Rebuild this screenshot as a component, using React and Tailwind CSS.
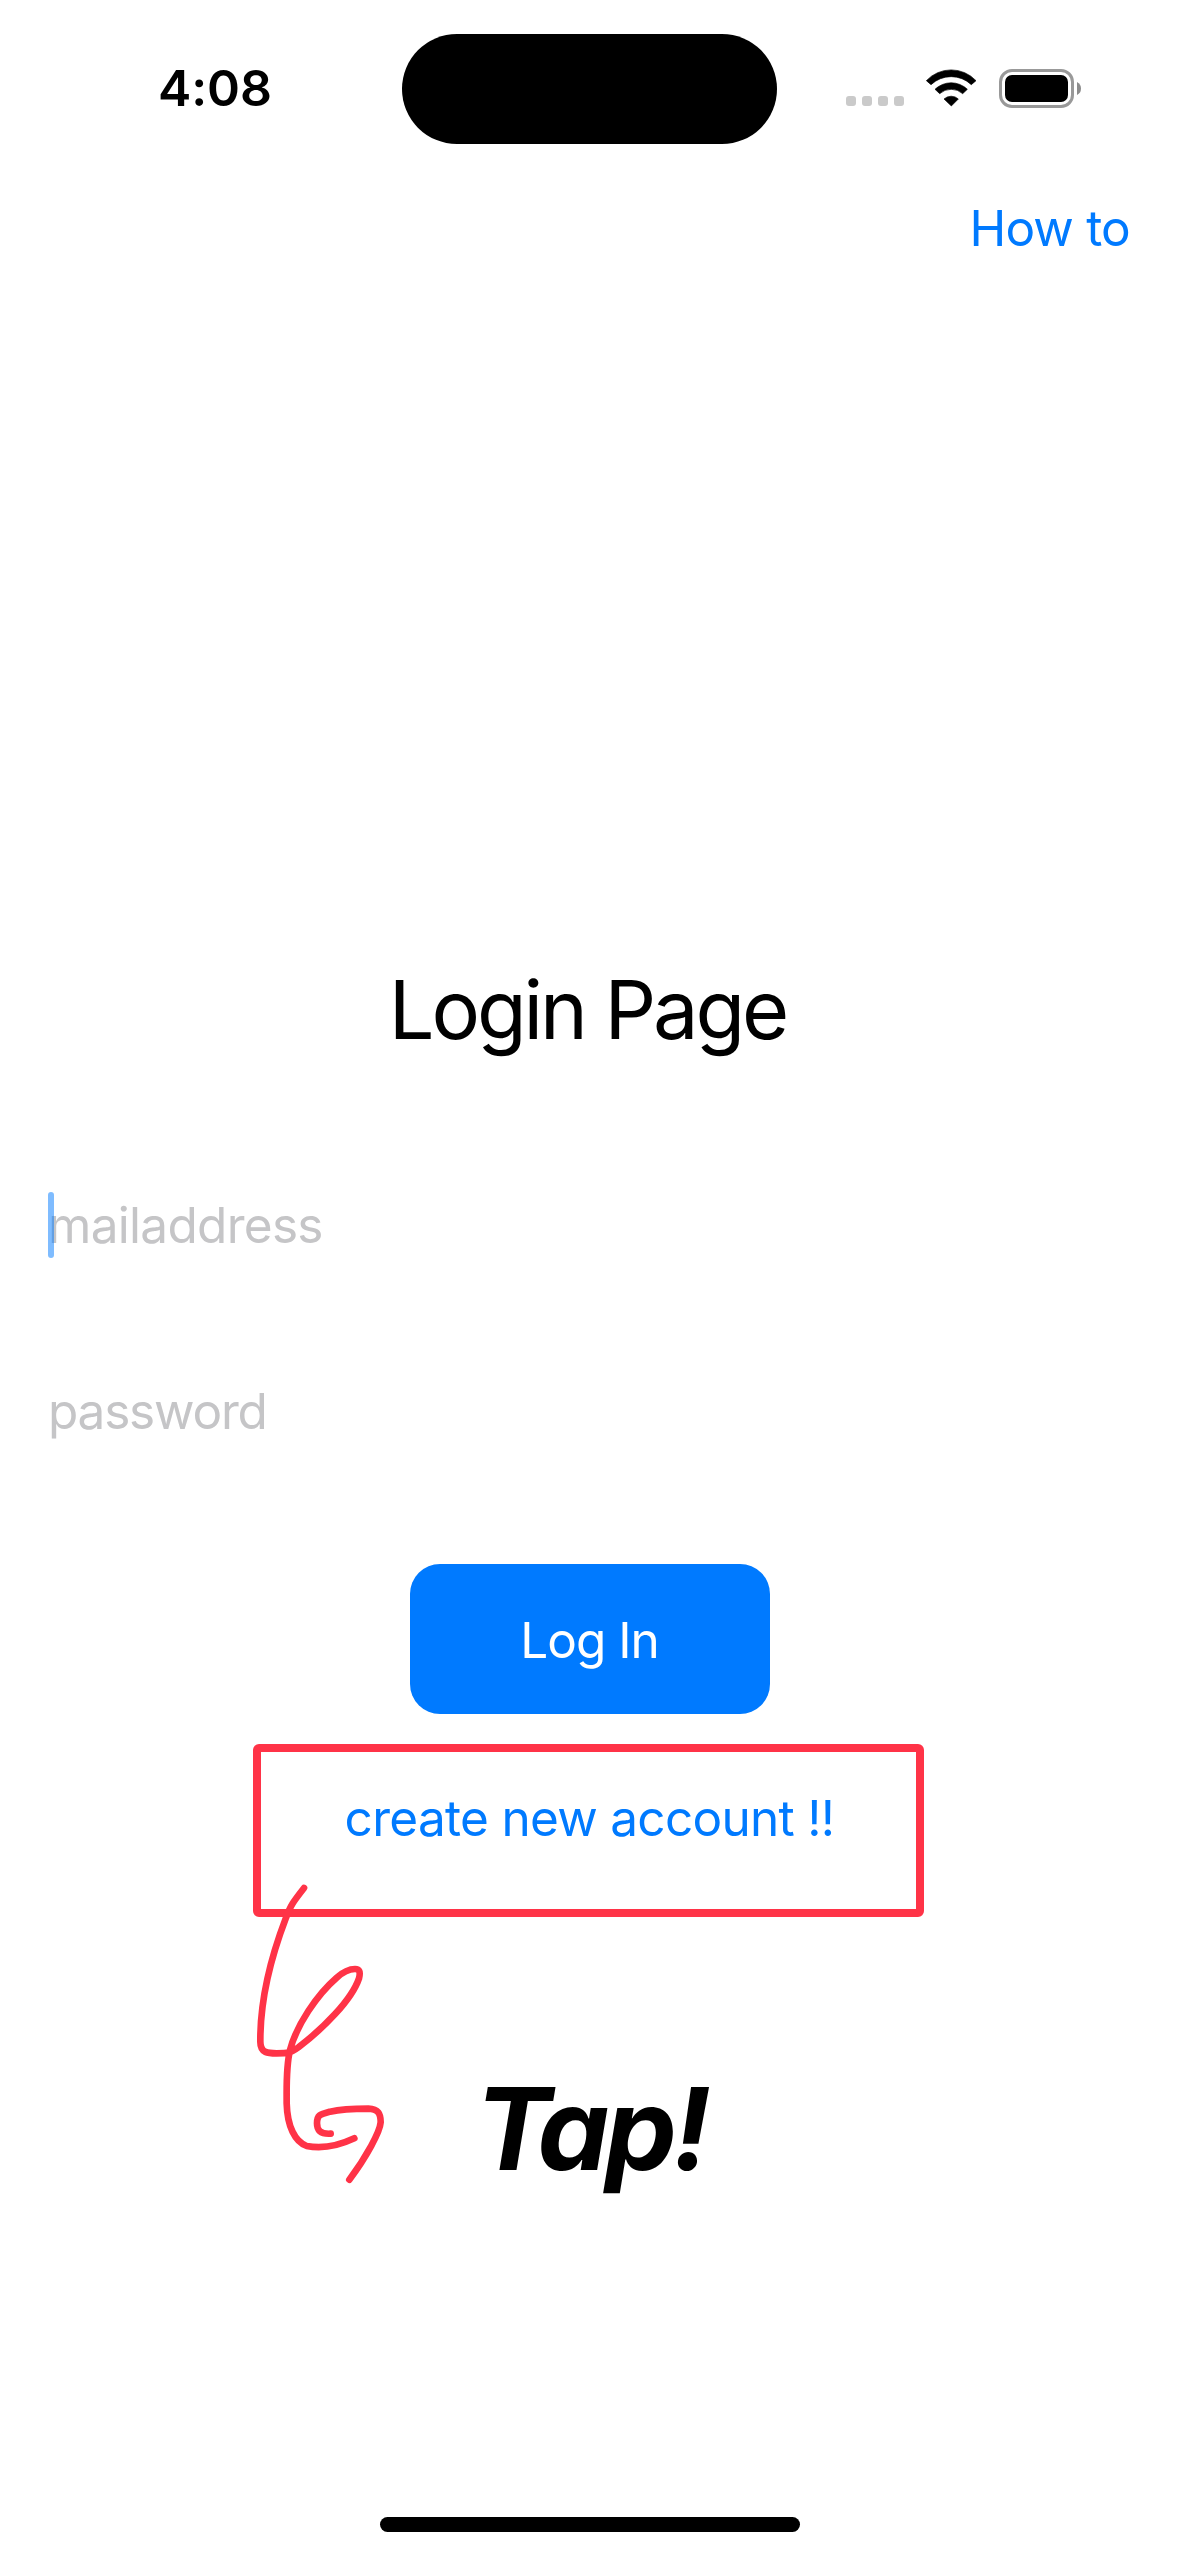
import React from "react";

function Wifi() {
  return (
    <svg className="h-[37.3px] w-[50.7px]" viewBox="0 0 152 112" fill="#000" stroke="#000" strokeWidth="2" strokeLinejoin="round">
      <path d="M1 35 A102 102 0 0 1 150 35 L136 47 A88 88 0 0 0 15 47 Z" />
      <path d="M27 61 A70 70 0 0 1 124 61 L110 74 A52 52 0 0 0 41 74 Z" />
      <path d="M54 90 A32 32 0 0 1 97 90 L76 111 Z" />
    </svg>
  );
}

function Battery() {
  return (
    <div className="flex items-center gap-[3px]">
      <div className="h-[39px] w-[75px] rounded-[13px] border-[3px] border-[#999] p-[3px]">
        <div className="h-full w-full rounded-[7px] bg-black" />
      </div>
      <svg className="h-[13px] w-1" viewBox="0 0 4 13" fill="#8c8c8c">
        <path d="M0 0 Q4 2 4 6.5 Q4 11 0 13 Z" />
      </svg>
    </div>
  );
}

function StatusBar() {
  return (
    <header className="flex h-[178px] items-start pt-[34px]">
      <div className="flex h-[110px] w-[402px] items-center pb-[3px] pl-[158px] text-[50px] font-semibold leading-none tracking-[-0.1px]">
        4:08
      </div>
      <div className="h-[110px] w-[375px] rounded-full bg-black" />
      <div className="flex h-[110px] flex-1 items-center pb-[2px] pl-[69px]">
        <div className="mt-[26px] flex gap-1.5">
          <i className="size-2.5 rounded-[3px] bg-[#cacaca]" />
          <i className="size-2.5 rounded-[3px] bg-[#cacaca]" />
          <i className="size-2.5 rounded-[3px] bg-[#cacaca]" />
          <i className="size-2.5 rounded-[3px] bg-[#cacaca]" />
        </div>
        <div className="ml-[22px] mr-[22px] flex">
          <Wifi />
        </div>
        <Battery />
      </div>
    </header>
  );
}

function Scribble() {
  return (
    <svg
      className="pointer-events-none absolute -left-[20.5px] top-[118px] h-[330px] w-[160px]"
      viewBox="0 0 480 990"
      fill="none"
      stroke="#ff3347"
      strokeWidth="20"
      strokeLinecap="round"
      strokeLinejoin="round"
    >
      <path d="M192 54 C160 95 152 105 137 146 C105 230 60 370 61 515 C61 550 85 550 110 550 C145 550 150 550 175 532 C250 475 335 390 357 325 C362 305 358 297 345 297 C325 297 310 305 290 323 C230 375 170 465 150 540 C138 590 140 640 140 700 C142 770 165 815 200 828 C240 836 290 830 343 805" />
      <path d="M272 791 C240 793 231 780 231 760 C231 735 240 733 270 725 C310 716 350 716 385 716 C415 718 422 730 422 757 C420 785 380 860 328 929" />
    </svg>
  );
}

export default function App() {
  return (
    <div className="flex h-[2556px] w-[1179px] flex-col overflow-hidden bg-white font-['Inter',sans-serif] text-[49.5px] text-black">
      <StatusBar />
      <nav className="flex justify-end pr-[49px]">
        <a className="leading-[100px] tracking-[-0.8px] text-[#007aff]">How to</a>
      </nav>
      <main className="flex flex-col items-center pt-[682px]">
        <h1 className="pr-[4px] text-[81px] leading-[100px] tracking-[-3.1px]">Login Page</h1>
        <div className="mt-[115px] w-full px-12">
          <div className="relative leading-[100px] tracking-[-0.7px] text-[#c5c5c7]">
            mailaddress
            <span className="absolute left-0 top-[17px] h-[66px] w-1.5 rounded-full bg-[#007aff]/50" />
          </div>
        </div>
        <div className="mt-[86px] w-full px-12 leading-[100px] tracking-[-1.2px] text-[#c5c5c7]">password</div>
        <button className="mt-[103px] h-[150px] w-[360px] rounded-[30px] bg-[#007aff] pt-0.5 leading-[100px] tracking-[-1px] text-white">
          Log In
        </button>
        <div className="relative mt-[30px] mr-[3px] h-[173px] w-[671px] rounded-[6px] border-8 border-[#ff3347] pl-[3px] pt-4 text-center leading-[100px] text-[#007aff]">
          <span className="tracking-[-0.7px]">create new account !!</span>
          <Scribble />
        </div>
        <p className="mt-[152px] pl-[2px] text-[114px] font-bold italic leading-[120px] tracking-[-4.6px]">Tap!</p>
      </main>
      <div className="mx-auto mb-6 mt-auto h-[15px] w-[420px] rounded-full bg-black" />
    </div>
  );
}
